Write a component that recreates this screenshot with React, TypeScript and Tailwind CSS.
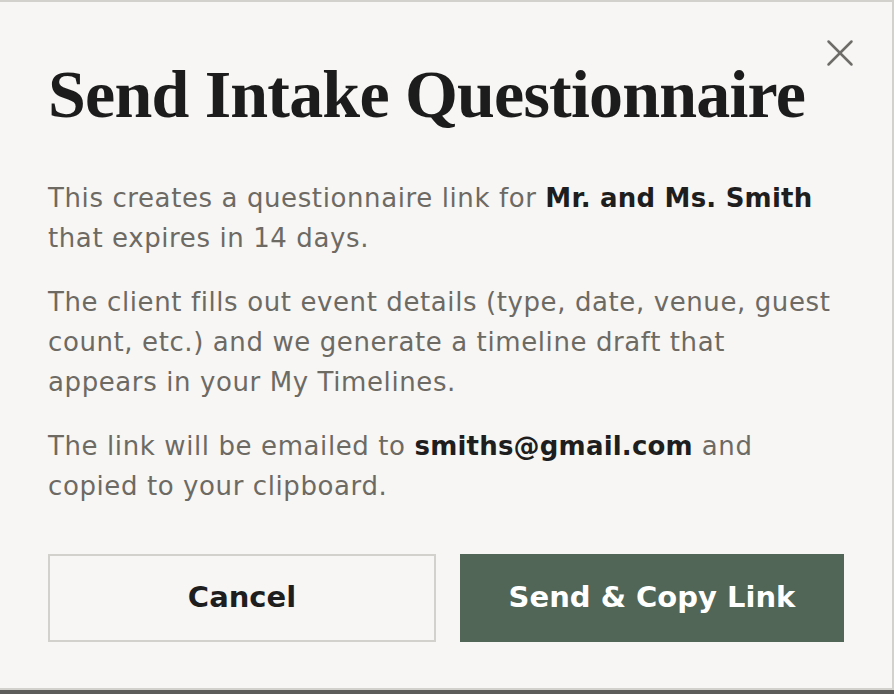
import { X } from 'lucide-react';

export default function App() {
  return (
    <div className="w-[894px] h-[694px] bg-[#5c5c5a] overflow-hidden">
      <div className="relative w-[894px] h-[690px] overflow-hidden bg-[#f7f6f4] border-t-2 border-r-2 border-b-2 border-[#d3d1cb] px-12">
        <button className="absolute right-[29px] top-[28px] text-[#6e6d69]">
          <X size={46} strokeWidth={1.3} />
        </button>

        <h1 className="pt-[52px] text-[68px] leading-[80px] font-bold whitespace-nowrap text-[#1c1c1c] tracking-[-0.8px] [font-family:'Liberation_Serif',serif]">
          Send Intake Questionnaire
        </h1>

        <div className="mt-[44px] flex flex-col gap-6 text-[26px] leading-[40px] tracking-[0.6px] whitespace-nowrap text-[#6d6a64] [font-family:'DejaVu_Sans','Noto_Sans',sans-serif]">
          <p>
            This creates a questionnaire link for{' '}
            <span className="font-bold tracking-[0.2px] text-[#1e1e1e]">Mr. and Ms. Smith</span>
            <br />
            that expires in 14 days.
          </p>
          <p>
            The client fills out event details (type, date, venue, guest
            <br />
            count, etc.) and we generate a timeline draft that
            <br />
            appears in your My Timelines.
          </p>
          <p>
            The link will be emailed to{' '}
            <span className="font-bold tracking-[0.2px] text-[#1e1e1e]">smiths@gmail.com</span> and
            <br />
            copied to your clipboard.
          </p>
        </div>

        <div className="mt-[48px] flex gap-6 [font-family:'DejaVu_Sans','Noto_Sans',sans-serif]">
          <button className="w-[388px] h-[88px] border-2 border-[#d3d1cb] text-[29px] font-semibold text-[#1e1e1e]">
            Cancel
          </button>
          <button className="w-[384px] h-[88px] bg-[#516657] text-[29px] font-semibold text-white">
            Send &amp; Copy Link
          </button>
        </div>
      </div>
    </div>
  );
}
